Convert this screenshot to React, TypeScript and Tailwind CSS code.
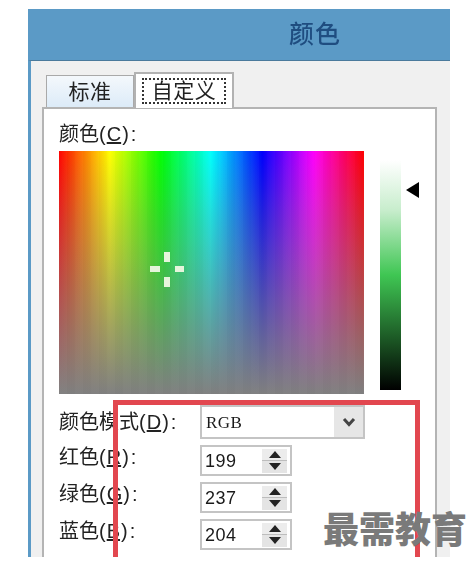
const cjk = "font-['Liberation_Sans','Noto_Sans_CJK_SC',sans-serif]";

function Label({ text, hot, center }: { text: string; hot: string; center?: boolean }) {
  return (
    <div className={`${cjk} ${center ? "self-center" : ""} text-[20px] leading-[24px] text-[#222] whitespace-nowrap`}>
      {text}(<span className="mx-[1px] underline">{hot}</span>)<span className="ml-[2px]">:</span>
    </div>
  );
}

function Spin({ value }: { value: string }) {
  return (
    <div className="flex h-[31px] w-[92px] items-center justify-between border-2 border-[#c4c4c4] bg-white pl-[3px] pr-[3px]">
      <span className="font-['Liberation_Sans',sans-serif] text-[18px] leading-none tracking-[0.5px] text-[#1a1a1a]">{value}</span>
      <div className="flex h-[24px] w-[25px] flex-col gap-[1px] bg-[#bdbdbd]">
        <div className="flex flex-1 items-center justify-center bg-[#ececec]">
          <svg width="12" height="7" viewBox="0 0 12 7"><path d="M6 0 L12 7 L0 7 Z" fill="#222" /></svg>
        </div>
        <div className="flex flex-1 items-center justify-center bg-[#e4e4e4]">
          <svg width="12" height="7" viewBox="0 0 12 7"><path d="M0 0 L12 0 L6 7 Z" fill="#222" /></svg>
        </div>
      </div>
    </div>
  );
}

export default function App() {
  return (
    <div className="relative h-[568px] w-[475px] overflow-hidden bg-white">
      <div className="ml-[28px] pt-[9px]">
        <div className="h-[548px] w-[422px] overflow-hidden blur-[0.5px]">
          {/* title bar */}
          <div className="flex h-[51px] items-center bg-[#5b9ac6] pl-[261px]">
            <span className={`${cjk} text-[25px] font-medium leading-none tracking-[1px] text-[#1f4d80]`}>颜色</span>
          </div>

          {/* dialog body */}
          <div className="h-[497px] border-t border-l-[3px] border-t-[#4a7a9c] border-l-[#5b9ac6] bg-[#f0f0f0]">
            <div className="flex h-[46px] items-end pl-[15px]">
              <div className={`${cjk} flex h-[32px] w-[88px] items-center justify-center border border-b-0 border-[#a9a9a9] bg-gradient-to-b from-[#f4f8fc] to-[#dcebf8] text-[21px] tracking-[0.5px] text-[#222]`}>
                标准
              </div>
              <div className="z-10 -mb-[1px] flex h-[36px] w-[100px] items-center justify-center border-2 border-b-0 border-[#b2b2b2] bg-white">
                <span className={`${cjk} border-2 border-dotted border-[#333] px-[8px] text-[21px] leading-[22px] tracking-[0.5px] text-[#222]`}>自定义</span>
              </div>
            </div>

            <div className="ml-[11px] h-[460px] w-[395px] border-2 border-[#b4b4b4] bg-white pl-[15px] pt-[13px]">
              <Label text="颜色" hot="C" />

              <div className="mt-[5px] flex items-start">
                <div className="relative h-[243px] w-[305px] bg-[repeating-linear-gradient(to_right,rgba(255,255,255,0.012)_0px,rgba(255,255,255,0.012)_8px,rgba(0,0,0,0.012)_8px,rgba(0,0,0,0.012)_16px),linear-gradient(to_bottom,rgba(128,128,128,0),rgba(128,128,128,1)),linear-gradient(to_right,#f00,#ff0,#0f0,#0ff,#00f,#f0f,#f00)]">
                  {/* crosshair */}
                  <div className="absolute left-[105px] top-[101px] h-[10px] w-[6px] bg-[#e6f5dc]" />
                  <div className="absolute left-[105px] top-[126px] h-[10px] w-[6px] bg-[#e6f5dc]" />
                  <div className="absolute left-[91px] top-[115px] h-[6px] w-[10px] bg-[#e6f5dc]" />
                  <div className="absolute left-[116px] top-[115px] h-[6px] w-[9px] bg-[#e6f5dc]" />
                </div>
                <div className="ml-[16px] mt-[9px] h-[230px] w-[21px] bg-[linear-gradient(to_bottom,#ffffff,#c7edcc_22%,#3fc653_50%,#000000)]" />
                <svg className="ml-[5px] mt-[31px]" width="13" height="16" viewBox="0 0 13 16">
                  <path d="M0 8 L13 0 L13 16 Z" fill="#000" />
                </svg>
              </div>

              <div className="mt-[11px] grid grid-cols-[141px_1fr] items-start gap-y-[6px]">
                <Label text="颜色模式" hot="D" center />
                <div className="flex h-[34px] w-[165px] items-center justify-between border-2 border-[#c4c4c4] bg-white pl-[4px]">
                  <span className="font-['Liberation_Serif',serif] text-[17px] leading-none tracking-[0.5px] text-[#1a1a1a]">RGB</span>
                  <div className="flex h-full w-[29px] items-center justify-center bg-[#e6e6e6]">
                    <svg width="14" height="10" viewBox="0 0 14 10" fill="none">
                      <path d="M2 2 L7 7.5 L12 2" stroke="#444" strokeWidth="3" />
                    </svg>
                  </div>
                </div>
                <Label text="红色" hot="R" />
                <Spin value="199" />
                <Label text="绿色" hot="G" />
                <Spin value="237" />
                <Label text="蓝色" hot="B" />
                <Spin value="204" />
              </div>
            </div>
          </div>
        </div>
      </div>

      {/* red annotation box */}
      <div className="absolute left-[113px] top-[400px] h-[157px] w-[307px] border-[5px] border-b-0 border-[#e2474f]" />

      {/* watermark */}
      <div className="absolute left-[323px] top-[507px] font-['Noto_Sans_CJK_SC',sans-serif] text-[36px] font-black leading-[40px] whitespace-nowrap text-[#7a7a7a]">
        最需教育
      </div>
    </div>
  );
}
